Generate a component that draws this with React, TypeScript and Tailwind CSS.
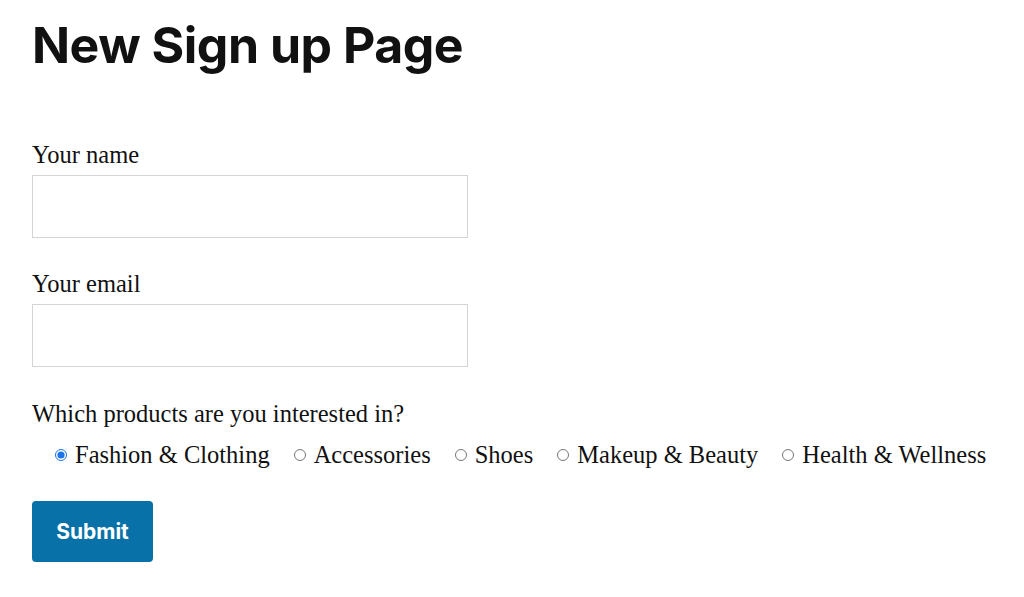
import React from 'react';

const OPTIONS = ['Fashion & Clothing', 'Accessories', 'Shoes', 'Makeup & Beauty', 'Health & Wellness'];

const Field: React.FC<{ label: string; type?: string }> = ({ label, type = 'text' }) => (
  <div className="flex flex-col">
    <label className="text-[24.5px] leading-[30px] text-[#111]">{label}</label>
    <input type={type} className="mt-[5px] w-[436px] h-[63px] border border-[#d4d4d4] bg-white outline-none" />
  </div>
);

export default function App() {
  const [choice, setChoice] = React.useState(OPTIONS[0]);

  return (
    <div className="min-h-screen bg-white pl-[32px] pt-[15px]" style={{ fontFamily: '"Liberation Serif", serif' }}>
      <h1 className="text-[50px] leading-[60px] font-bold tracking-[-0.5px] text-[#111]" style={{ fontFamily: 'Inter, sans-serif' }}>
        New Sign up Page
      </h1>

      <form className="mt-[65px] flex flex-col" onSubmit={e => e.preventDefault()}>
        <Field label="Your name" />
        <div className="mt-[31px]">
          <Field label="Your email" type="email" />
        </div>

        <div className="mt-[32px] text-[24.5px] leading-[30px] text-[#111]">Which products are you interested in?</div>
        <div className="mt-[11px] pl-[23px] flex items-center gap-[24px] text-[24.5px] leading-[30px] text-[#111]">
          {OPTIONS.map(opt => (
            <label key={opt} className="flex items-center gap-[8px]">
              <input
                type="radio"
                name="products"
                checked={choice === opt}
                onChange={() => setChoice(opt)}
                className="w-[12px] h-[12px] m-0 accent-[#1a73e8]"
              />
              <span>{opt}</span>
            </label>
          ))}
        </div>

        <button
          type="submit"
          className="mt-[31px] w-[121px] h-[61px] rounded-[4px] bg-[#0872a8] text-white text-[21px] font-bold"
          style={{ fontFamily: 'Inter, sans-serif' }}
        >
          Submit
        </button>
      </form>
    </div>
  );
}
